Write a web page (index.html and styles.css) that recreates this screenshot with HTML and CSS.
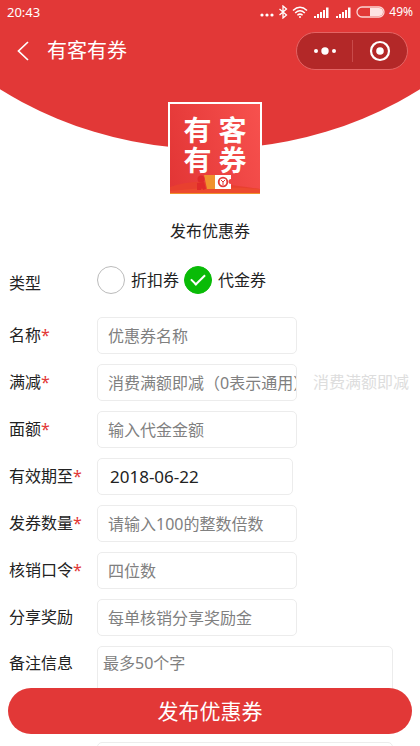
FILE: index.html
```
<!DOCTYPE html>
<html lang="zh-CN">
<head>
    <meta charset="UTF-8">
    <meta name="viewport" content="width=device-width, initial-scale=1.0">
    <title>有客有券</title>
    <link rel="stylesheet" href="styles.css">
</head>
<body>

<div class="page">
    <header class="hero">
        <div class="status-bar">
            <span class="time">20:43</span>
            <div class="status-icons">
                <svg width="14" height="14" viewBox="0 0 14 14" fill="#fff"><circle cx="2" cy="10" r="1.6"/><circle cx="7" cy="10" r="1.6"/><circle cx="12" cy="10" r="1.6"/></svg>
                <svg width="10" height="14" viewBox="0 0 10 14" fill="none" stroke="#fff" stroke-width="1.3"><path d="M1.5 4l7 6L5 13V1l3.500 3-7 6"/></svg>
                <svg width="16" height="14" viewBox="0 0 16 14" fill="none" stroke="#fff" stroke-width="1.5"><path d="M1 5.500Q8-1 15 5.500M3.200 8Q8 3.500 12.800 8M5.400 10.300Q8 8 10.600 10.300"/><circle cx="8" cy="12" r="1" fill="#fff" stroke="none"/></svg>
                <svg class="signal" width="16" height="14" viewBox="0 0 16 14" fill="#fff"><path d="M0 11h2v2H0zM3 9h2v4H3zM6 7h2v6H6zM9 5h2v8H9zM12 2.500h2.500V13H12z"/></svg>
                <svg class="signal" width="16" height="14" viewBox="0 0 16 14" fill="#fff"><path d="M0 11h2v2H0zM3 9h2v4H3zM6 7h2v6H6zM9 5h2v8H9zM12 2.500h2.500V13H12z"/></svg>
                <svg width="29" height="14" viewBox="0 0 29 14"><rect x="1" y="2" width="27" height="10" rx="5" fill="none" stroke="#fbd5d4" stroke-width="1.3"/><path d="M14 3h9a4 4 0 0 1 0 8h-9z" fill="#fde3e2"/></svg>
                <span>49%</span>
            </div>
        </div>

        <div class="nav-bar">
            <a class="back" href="#" aria-label="返回">
                <svg width="12" height="20" viewBox="0 0 12 20" fill="none" stroke="#fff" stroke-width="1.7"><path d="M11 1L1.500 10 11 19"/></svg>
            </a>
            <h1>有客有券</h1>
            <div class="capsule">
                <button type="button" aria-label="更多">
                    <svg width="24" height="10" viewBox="0 0 24 10" fill="#fff"><circle cx="3" cy="5" r="2"/><circle cx="12" cy="5" r="3.700"/><circle cx="21" cy="5" r="2"/></svg>
                </button>
                <button type="button" aria-label="关闭">
                    <svg width="22" height="22" viewBox="0 0 22 22"><circle cx="11" cy="11" r="9" fill="none" stroke="#fff" stroke-width="2.200"/><circle cx="11" cy="11" r="3.800" fill="#fff"/></svg>
                </button>
            </div>
        </div>
    </header>

    <main>
        <div class="logo">
            <span>有</span><span>客</span><span>有</span><span>券</span>
            <svg class="logo-art" viewBox="0 0 90 20">
                <path d="M0 13Q20 6 45 9T90 15V20H0z" fill="#e8402f"/>
                <path d="M0 17Q45 11 90 15V20H0z" fill="#ec4a2f"/>
                <path d="M0 19h90v1H0z" fill="#f0922e"/>
                <path d="M34 1h11v14H37z" fill="#f0922e"/>
                <circle cx="31" cy="5" r="3.500" fill="#e02a2a"/>
                <path d="M27 9l7-1 2 7-3 1-1-2-1 2h-4z" fill="#e02a2a"/>
                <path d="M45 1h16v4a2 2 0 0 0 0 5v5H45z" fill="#fff"/>
                <circle cx="53" cy="8" r="4.300" fill="none" stroke="#e23837" stroke-width="1.800"/>
                <path d="M51 6l2 2 2-2M53 8v3" fill="none" stroke="#e23837"/>
            </svg>
        </div>
        <h2>发布优惠券</h2>

        <form id="coupon-form">
            <div class="form-row type-row">
                <span class="label">类型</span>
                <div class="radios">
                    <input type="radio" name="type" id="discount">
                    <label for="discount">折扣券</label>
                    <input type="radio" name="type" id="cash" checked>
                    <label for="cash">代金券</label>
                </div>
            </div>
            <div class="form-row">
                <label class="label" for="name">名称<em>*</em></label>
                <input type="text" id="name" placeholder="优惠券名称">
            </div>
            <div class="form-row">
                <label class="label" for="minimum">满减<em>*</em></label>
                <input type="text" id="minimum" placeholder="消费满额即减（0表示通用）">
                <span class="hint">消费满额即减</span>
            </div>
            <div class="form-row">
                <label class="label" for="amount">面额<em>*</em></label>
                <input type="text" id="amount" placeholder="输入代金金额">
            </div>
            <div class="form-row">
                <label class="label" for="expires">有效期至<em>*</em></label>
                <input type="text" id="expires" class="date" value="2018-06-22">
            </div>
            <div class="form-row">
                <label class="label" for="count">发券数量<em>*</em></label>
                <input type="text" id="count" placeholder="请输入100的整数倍数">
            </div>
            <div class="form-row">
                <label class="label" for="code">核销口令<em>*</em></label>
                <input type="text" id="code" placeholder="四位数">
            </div>
            <div class="form-row">
                <label class="label" for="reward">分享奖励</label>
                <input type="text" id="reward" placeholder="每单核销分享奖励金">
            </div>
            <div class="form-row note-row">
                <label class="label" for="note">备注信息</label>
                <textarea id="note" placeholder="最多50个字"></textarea>
            </div>
            <div class="form-row note-row">
                <span class="label"></span>
                <textarea aria-label="补充信息"></textarea>
            </div>
        </form>
    </main>

    <button class="submit-btn" type="submit" form="coupon-form">发布优惠券</button>
</div>

</body>
</html>
```
FILE: styles.css
```
/* Global reset */
* {
    margin: 0;
    padding: 0;
    box-sizing: border-box;
}

body {
    font-family: "Noto Sans", "Noto Sans CJK SC", sans-serif;
    font-size: 16px;
    line-height: 24px;
    color: #222;
    background-color: #fff;
}

svg {
    display: block;
}

button,
input,
textarea {
    font: inherit;
    color: inherit;
}

.page {
    position: relative;
    height: 100vh;
    overflow: hidden;
}

/* Red header with a curved bottom edge */
.hero {
    position: relative;
    height: 149px;
    overflow: hidden;
    color: #fff;
}

.hero::before {
    content: "";
    position: absolute;
    z-index: -1;
    left: 50%;
    bottom: 0;
    width: 190%;
    aspect-ratio: 1;
    border-radius: 50%;
    background-color: #e23837;
    transform: translateX(-50%);
}

.status-bar {
    display: flex;
    justify-content: space-between;
    align-items: center;
    height: 24px;
    padding: 0 7px;
    font-size: 13px;
}

.status-icons {
    display: flex;
    align-items: center;
    gap: 4px;
    font-size: 12px;
}

.signal {
    margin-left: 2px;
}

.nav-bar {
    display: flex;
    align-items: center;
    height: 54px;
    padding: 0 12px 0 17px;
}

.nav-bar h1 {
    flex: 1;
    margin-left: 18px;
    font-size: 20px;
    font-weight: 400;
}

.capsule {
    display: flex;
    width: 112px;
    height: 38px;
    border: 1px solid #e46464;
    border-radius: 19px;
    background-color: #b32828;
}

.capsule button {
    flex: 1;
    display: flex;
    justify-content: center;
    align-items: center;
    border: none;
    background: none;
    cursor: pointer;
}

.capsule button + button {
    background: linear-gradient(#c94a4a, #c94a4a) left center / 1px 22px no-repeat;
}

/* Logo overlaps the curve of the header */
.logo {
    position: relative;
    display: grid;
    grid-template-columns: 30px 30px;
    grid-auto-rows: 30px;
    column-gap: 5px;
    justify-content: center;
    width: 94px;
    height: 92px;
    margin: -47px 0 0 calc(50% - 42px);
    padding-top: 11px;
    border: 2px solid #fff;
    border-bottom: none;
    background: linear-gradient(75deg, #e23535, #f7514e);
    color: #fff;
    font-size: 28px;
    font-weight: 700;
    line-height: 30px;
    text-align: center;
}

.logo-art {
    position: absolute;
    left: 0;
    bottom: 0;
    width: 100%;
}

h2 {
    margin: 25px 0 22px;
    font-size: 16px;
    font-weight: 400;
    text-align: center;
}

/* Form */
form {
    display: flex;
    flex-direction: column;
    gap: 10px;
    padding: 0 9px;
}

.form-row {
    display: flex;
    align-items: center;
}

.label {
    flex: none;
    width: 88px;
    padding-bottom: 2px;
}

.label em {
    color: #e23837;
    font-style: normal;
}

.form-row input[type="text"],
.form-row textarea {
    border: 1px solid #ececec;
    border-radius: 5px;
    background-color: #fff;
    outline: none;
}

.form-row input[type="text"] {
    width: 200px;
    height: 37px;
    padding-left: 10px;
}

.form-row input.date {
    width: 196px;
    padding-left: 12px;
    font-size: 17px;
}

::placeholder {
    color: #808080;
}

.hint {
    margin-left: 16px;
    padding-bottom: 2px;
    color: #ddd;
    white-space: nowrap;
}

.type-row {
    margin-bottom: 12px;
}

.type-row .label {
    padding: 6px 0 0;
}

.radios {
    display: flex;
    align-items: center;
}

.radios label {
    margin: 0 5px 0 6px;
}

.radios input {
    appearance: none;
    width: 28px;
    height: 28px;
    border: 1px solid #bbb;
    border-radius: 50%;
}

.radios input:checked {
    display: flex;
    justify-content: center;
    align-items: center;
    border-color: #09bb07;
    background-color: #09bb07;
}

.radios input:checked::before {
    content: "";
    width: 12px;
    height: 6px;
    margin-top: -4px;
    border: solid #fff;
    border-width: 0 0 2px 2px;
    transform: rotate(-45deg);
}

.note-row {
    align-items: flex-start;
}

.note-row .label {
    padding-top: 5px;
}

.note-row textarea {
    flex: 1;
    height: 86px;
    margin-right: 18px;
    padding: 4px 5px;
    resize: none;
}

/* Publish button stays over the form */
.submit-btn {
    position: absolute;
    left: 8px;
    right: 8px;
    bottom: 12px;
    height: 46px;
    border: none;
    border-radius: 23px;
    background-color: #e23837;
    color: #fff;
    font-size: 21px;
    cursor: pointer;
}
```
